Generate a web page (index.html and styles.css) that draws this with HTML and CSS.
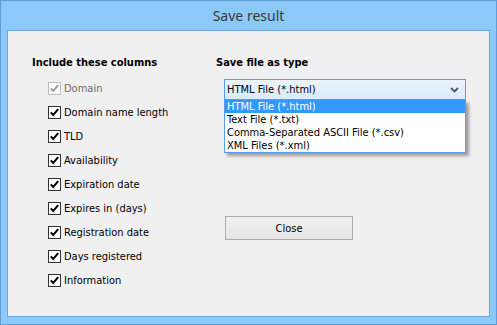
FILE: index.html
```html
<!DOCTYPE html>
<html lang="en">
<head>
    <meta charset="UTF-8">
    <title>Save result</title>
    <link rel="stylesheet" href="styles.css">
</head>
<body>
    <div class="window">
        <div class="titlebar">Save result</div>
        <div class="client">
            <div class="col-left">
                <div class="heading">Include these columns</div>
                <ul class="checks">
                    <li class="disabled"><span class="box"><svg width="13" height="13" viewBox="0 0 13 13"><rect x="0.5" y="0.5" width="12" height="12" fill="#fff" stroke="#bcbcbc"/><path d="M2.8 6.4 L5.2 8.9 L10.2 3.2" fill="none" stroke="#a0a0a0" stroke-width="2"/></svg></span>Domain</li>
                    <li><span class="box"><svg width="13" height="13" viewBox="0 0 13 13"><rect x="0.5" y="0.5" width="12" height="12" fill="#fff" stroke="#333"/><path d="M2.8 6.4 L5.2 8.9 L10.2 3.2" fill="none" stroke="#000" stroke-width="2"/></svg></span>Domain name length</li>
                    <li><span class="box"><svg width="13" height="13" viewBox="0 0 13 13"><rect x="0.5" y="0.5" width="12" height="12" fill="#fff" stroke="#333"/><path d="M2.8 6.4 L5.2 8.9 L10.2 3.2" fill="none" stroke="#000" stroke-width="2"/></svg></span>TLD</li>
                    <li><span class="box"><svg width="13" height="13" viewBox="0 0 13 13"><rect x="0.5" y="0.5" width="12" height="12" fill="#fff" stroke="#333"/><path d="M2.8 6.4 L5.2 8.9 L10.2 3.2" fill="none" stroke="#000" stroke-width="2"/></svg></span>Availability</li>
                    <li><span class="box"><svg width="13" height="13" viewBox="0 0 13 13"><rect x="0.5" y="0.5" width="12" height="12" fill="#fff" stroke="#333"/><path d="M2.8 6.4 L5.2 8.9 L10.2 3.2" fill="none" stroke="#000" stroke-width="2"/></svg></span>Expiration date</li>
                    <li><span class="box"><svg width="13" height="13" viewBox="0 0 13 13"><rect x="0.5" y="0.5" width="12" height="12" fill="#fff" stroke="#333"/><path d="M2.8 6.4 L5.2 8.9 L10.2 3.2" fill="none" stroke="#000" stroke-width="2"/></svg></span>Expires in (days)</li>
                    <li><span class="box"><svg width="13" height="13" viewBox="0 0 13 13"><rect x="0.5" y="0.5" width="12" height="12" fill="#fff" stroke="#333"/><path d="M2.8 6.4 L5.2 8.9 L10.2 3.2" fill="none" stroke="#000" stroke-width="2"/></svg></span>Registration date</li>
                    <li><span class="box"><svg width="13" height="13" viewBox="0 0 13 13"><rect x="0.5" y="0.5" width="12" height="12" fill="#fff" stroke="#333"/><path d="M2.8 6.4 L5.2 8.9 L10.2 3.2" fill="none" stroke="#000" stroke-width="2"/></svg></span>Days registered</li>
                    <li><span class="box"><svg width="13" height="13" viewBox="0 0 13 13"><rect x="0.5" y="0.5" width="12" height="12" fill="#fff" stroke="#333"/><path d="M2.8 6.4 L5.2 8.9 L10.2 3.2" fill="none" stroke="#000" stroke-width="2"/></svg></span>Information</li>
                </ul>
            </div>
            <div class="col-right">
                <div class="heading">Save file as type</div>
                <div class="combo">
                    <div class="combo-field">
                        <span>HTML File (*.html)</span>
                        <svg class="chevron" width="9" height="6" viewBox="0 0 9 6"><path d="M1 1 L4.5 4.5 L8 1" fill="none" stroke="#555" stroke-width="1.8"/></svg>
                    </div>
                    <ul class="combo-list">
                        <li class="selected">HTML File (*.html)</li>
                        <li>Text File (*.txt)</li>
                        <li>Comma-Separated ASCII File (*.csv)</li>
                        <li>XML Files (*.xml)</li>
                    </ul>
                </div>
                <button class="btn">Close</button>
            </div>
        </div>
    </div>
</body>
</html>
```

FILE: styles.css
```css
body {
    margin: 0;
    background: #8cc8f8;
    font-family: "DejaVu Sans Condensed", "DejaVu Sans", sans-serif;
    font-size: 11px;
}

.window {
    width: 497px;
    height: 325px;
    box-sizing: border-box;
    background: #8cc8f8;
    border: 1px solid #5e9ed8;
    padding: 0 6px 7px 6px;
    display: flex;
    flex-direction: column;
}

.titlebar {
    height: 29px;
    line-height: 29px;
    text-align: center;
    font-family: "Noto Sans", "Open Sans", sans-serif;
    font-size: 14px;
    color: #3a3a3a;
}

.client {
    flex: 1;
    background: #f0f0f0;
    border: 1px solid #6da5dc;
    padding: 25px 0 0 24px;
    display: grid;
    grid-template-columns: 184px 1fr;
}

.heading {
    font-weight: bold;
    line-height: 13px;
    height: 13px;
    color: #000;
}

.checks {
    list-style: none;
    margin: 7px 0 0 16px;
    padding: 0;
}

.checks li {
    height: 24px;
    display: flex;
    align-items: center;
    color: #000;
}

.checks li.disabled {
    color: #6d6d6d;
}

.box {
    width: 13px;
    height: 13px;
    margin-right: 3px;
    display: block;
}

.box svg {
    display: block;
}

.combo {
    position: relative;
    margin: 10px 0 0 8px;
    width: 242px;
}

.combo-field {
    height: 21px;
    box-sizing: border-box;
    border: 1px solid #569de5;
    background: linear-gradient(#ecf4fc, #d9eafb);
    padding: 0 6px 0 2px;
    display: flex;
    align-items: center;
    justify-content: space-between;
    color: #000;
}

.chevron {
    display: block;
}

.combo-list {
    position: absolute;
    left: 0;
    top: 21px;
    width: 242px;
    box-sizing: border-box;
    margin: 0;
    padding: 0;
    list-style: none;
    background: #fff;
    border: 1px solid #569de5;
    border-top: none;
    box-shadow: 3px 3px 3px rgba(0, 0, 0, 0.35);
}

.combo-list li {
    height: 13px;
    line-height: 13px;
    padding-left: 2px;
    color: #000;
}

.combo-list li.selected {
    background: #3399ff;
    color: #fff;
}

.btn {
    display: block;
    margin: 116px 0 0 9px;
    width: 128px;
    height: 24px;
    border: 1px solid #acacac;
    background: linear-gradient(#f0f0f0, #e5e5e5);
    font-family: inherit;
    font-size: 11px;
    color: #000;
    padding: 0;
}
```
